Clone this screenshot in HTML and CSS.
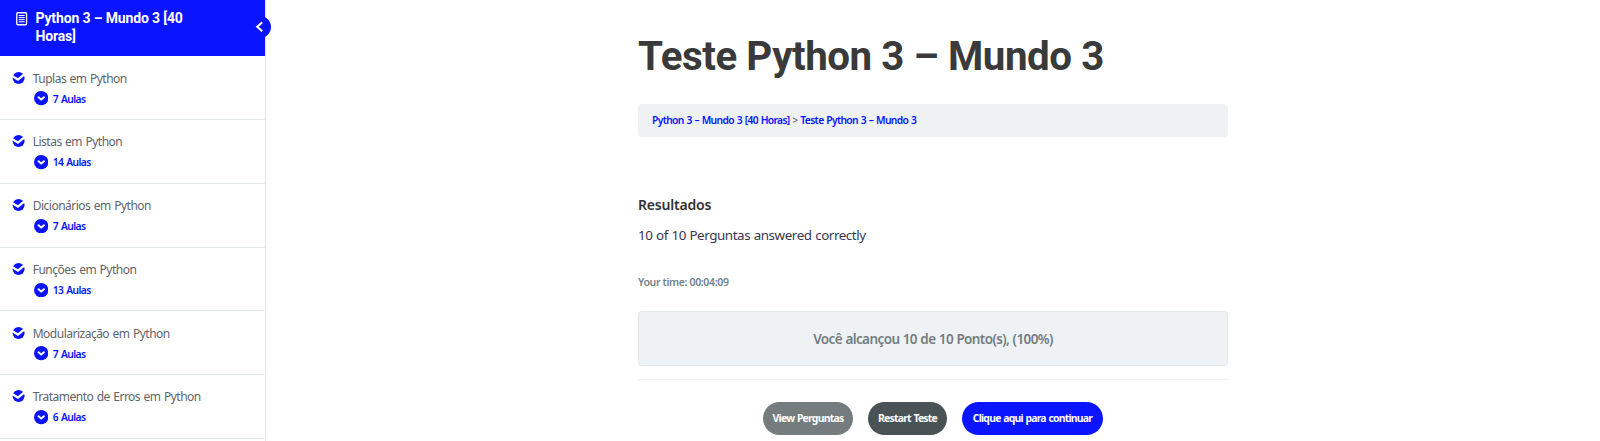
FILE: index.html
```html
<!DOCTYPE html>
<html lang="pt-BR">
<head>
<meta charset="utf-8">
<title>Teste Python 3 – Mundo 3</title>
<link rel="stylesheet" href="styles.css">
</head>
<body>
<svg class="defs" width="0" height="0" aria-hidden="true">
  <symbol id="check" viewBox="0 0 14 14"><circle cx="6.6" cy="7" r="6" fill="#0a14ff"/><path d="M0 5 L5.9 8.6 L13.6 2.4" fill="none" stroke="#fff" stroke-width="2.3"/></symbol>
  <symbol id="down" viewBox="0 0 14 14"><circle cx="7" cy="7" r="7" fill="#0a14ff"/><path d="M4.4 6.1 L7 8.4 L9.6 6.1" fill="none" stroke="#fff" stroke-width="1.9" stroke-linecap="round" stroke-linejoin="round"/></symbol>
</svg>
<div class="page">
  <aside class="sidebar">
    <header class="course">
      <svg class="course-icon" viewBox="0 0 12 14"><rect x=".75" y=".75" width="9.8" height="12" rx="1" fill="none" stroke="#fff" stroke-width="1.3"/><path d="M2.7 3.5h6M2.7 5.6h6M2.7 7.7h6M2.7 9.8h6" stroke="#fff" stroke-width="1"/></svg>
      <h2 class="course-title">Python 3 – Mundo 3 [40 Horas]</h2>
      <span class="toggle"><svg viewBox="0 0 22 22"><path d="M13.2 6.2 L8.2 10.7 L13.2 15.2" fill="none" stroke="#fff" stroke-width="2.1"/></svg></span>
    </header>
    <ul class="lessons">
      <li class="lesson"><svg class="check"><use href="#check"/></svg><div><p class="name">Tuplas em Python</p><p class="count"><svg class="down"><use href="#down"/></svg><span>7 Aulas</span></p></div></li>
      <li class="lesson"><svg class="check"><use href="#check"/></svg><div><p class="name">Listas em Python</p><p class="count"><svg class="down"><use href="#down"/></svg><span>14 Aulas</span></p></div></li>
      <li class="lesson"><svg class="check"><use href="#check"/></svg><div><p class="name">Dicionários em Python</p><p class="count"><svg class="down"><use href="#down"/></svg><span>7 Aulas</span></p></div></li>
      <li class="lesson"><svg class="check"><use href="#check"/></svg><div><p class="name">Funções em Python</p><p class="count"><svg class="down"><use href="#down"/></svg><span>13 Aulas</span></p></div></li>
      <li class="lesson"><svg class="check"><use href="#check"/></svg><div><p class="name">Modularização em Python</p><p class="count"><svg class="down"><use href="#down"/></svg><span>7 Aulas</span></p></div></li>
      <li class="lesson"><svg class="check"><use href="#check"/></svg><div><p class="name">Tratamento de Erros em Python</p><p class="count"><svg class="down"><use href="#down"/></svg><span>6 Aulas</span></p></div></li>
    </ul>
  </aside>
  <main class="content">
    <h1 class="title">Teste Python 3 – Mundo 3</h1>
    <nav class="crumbs"><a>Python 3 – Mundo 3 [40 Horas]</a> &gt; <a>Teste Python 3 – Mundo 3</a></nav>
    <h4 class="results">Resultados</h4>
    <p class="score">10 of 10 Perguntas answered correctly</p>
    <p class="time">Your time: 00:04:09</p>
    <div class="points"><span>Você alcançou 10 de 10 Ponto(s), (100%)</span></div>
    <div class="actions">
      <button class="btn view">View Perguntas</button>
      <button class="btn restart">Restart Teste</button>
      <button class="btn next">Clique aqui para continuar</button>
    </div>
  </main>
</div>
</body>
</html>
```
FILE: styles.css
```css
* { box-sizing: border-box; margin: 0; padding: 0; }
body { height: 441px; overflow: hidden; background: #fff; font-family: "Noto Sans", "Open Sans", sans-serif; }
.defs { position: absolute; }
.page { display: flex; height: 441px; }
.sidebar { flex: 0 0 265px; border-right: 1px solid #e2e7ea; }
.course { position: relative; display: flex; width: 265px; height: 56.4px; padding: 9px 60px 0 15px; background: #0a14ff; color: #fff; }
.course-icon { flex: none; width: 12px; height: 14px; margin: 3px 7.5px 0 1px; }
.course-title { font: 700 14px/18px Roboto, sans-serif; letter-spacing: -.15px; }
.toggle { position: absolute; left: 249px; top: 16px; width: 22px; height: 22px; border-radius: 50%; background: #0a14ff; }
.toggle svg { display: block; width: 22px; height: 22px; }
.lessons { list-style: none; }
.lesson { display: flex; height: 63.75px; padding: 13.2px 0 0 12.3px; border-bottom: 1px solid #e2e7ea; }
.check { flex: none; width: 14px; height: 14px; margin: 1px 6.4px 0 0; }
.name { color: #5f6468; font-size: 12px; line-height: 18px; white-space: nowrap; letter-spacing: -.5px; word-spacing: .8px; }
.count { display: flex; align-items: center; gap: 4.6px; margin-top: 2px; padding-left: 1px; color: #0a14ff; font-size: 10.3px; font-weight: 600; line-height: 18px; letter-spacing: -.6px; word-spacing: .9px; }
.down { flex: none; width: 14.4px; height: 14.4px; }
.content { width: 590px; margin-left: 372px; }
.title { margin-top: 29px; color: #3a3a3a; font: 700 40.3px/56px Roboto, sans-serif; white-space: nowrap; letter-spacing: -.45px; }
.crumbs { height: 33px; margin-top: 19px; padding-left: 14px; border-radius: 4px; background: #eef2f5; color: #555; font-size: 10.3px; line-height: 32px; letter-spacing: -.66px; word-spacing: .75px; }
.crumbs a { color: #0a14ff; font-weight: 600; }
.results { margin-top: 57px; color: #333; font-size: 14px; font-weight: 600; line-height: 22px; letter-spacing: -.2px; }
.score { margin-top: 8px; color: #373750; font-size: 13.4px; line-height: 22px; letter-spacing: -.43px; word-spacing: .5px; }
.time { margin-top: 26px; color: #728188; font-size: 10.5px; font-weight: 600; line-height: 20px; letter-spacing: -.35px; }
.points { height: 55px; margin-top: 19px; border: 1px solid #e2e7ea; border-radius: 4px; background: #eef2f5; color: #757c80; font-size: 13.5px; font-weight: 600; line-height: 54px; text-align: center; letter-spacing: -.59px; word-spacing: .4px; }
.actions { display: flex; justify-content: center; gap: 15px; margin-top: 13px; padding-top: 22px; border-top: 1px solid #edf0f3; }
.btn { height: 33px; border: 0; border-radius: 17px; color: #fff; font: 700 10.4px/33px "Noto Sans", sans-serif; white-space: nowrap; letter-spacing: -.75px; word-spacing: .6px; }
.view { width: 90px; background: #757c7d; }
.restart { width: 79px; background: #495255; }
.next { width: 141px; background: #0a14ff; }
```
